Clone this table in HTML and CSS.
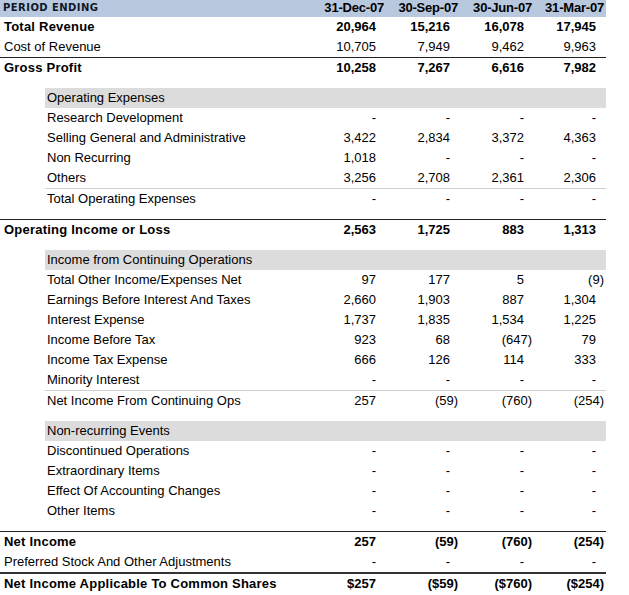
FILE: index.html
```html
<!DOCTYPE html>
<html>
<head>
<meta charset="utf-8">
<title>Income Statement</title>
<link rel="stylesheet" href="styles.css">
</head>
<body>
<div class="stmt">
  <div class="row head">
    <div class="lbl">PERIOD ENDING</div>
    <div class="c">31-Dec-07</div><div class="c">30-Sep-07</div><div class="c">30-Jun-07</div><div class="c">31-Mar-07</div>
  </div>
  <div class="row b">
    <div class="lbl">Total Revenue</div>
    <div class="c p">20,964</div><div class="c p">15,216</div><div class="c p">16,078</div><div class="c p">17,945</div>
  </div>
  <div class="row">
    <div class="lbl">Cost of Revenue</div>
    <div class="c p">10,705</div><div class="c p">7,949</div><div class="c p">9,462</div><div class="c p">9,963</div>
  </div>
  <div class="row b dark">
    <div class="lbl">Gross Profit</div>
    <div class="c p">10,258</div><div class="c p">7,267</div><div class="c p">6,616</div><div class="c p">7,982</div>
  </div>

  <div class="group">
    <div class="row sub band"><div class="lbl">Operating Expenses</div></div>
    <div class="row sub"><div class="lbl">Research Development</div><div class="c p">-</div><div class="c p">-</div><div class="c p">-</div><div class="c p">-</div></div>
    <div class="row sub"><div class="lbl">Selling General and Administrative</div><div class="c p">3,422</div><div class="c p">2,834</div><div class="c p">3,372</div><div class="c p">4,363</div></div>
    <div class="row sub"><div class="lbl">Non Recurring</div><div class="c p">1,018</div><div class="c p">-</div><div class="c p">-</div><div class="c p">-</div></div>
    <div class="row sub"><div class="lbl">Others</div><div class="c p">3,256</div><div class="c p">2,708</div><div class="c p">2,361</div><div class="c p">2,306</div></div>
    <div class="row sub light"><div class="lbl">Total Operating Expenses</div><div class="c p">-</div><div class="c p">-</div><div class="c p">-</div><div class="c p">-</div></div>
  </div>

  <div class="row b dark gap">
    <div class="lbl">Operating Income or Loss</div>
    <div class="c p">2,563</div><div class="c p">1,725</div><div class="c p">883</div><div class="c p">1,313</div>
  </div>

  <div class="group">
    <div class="row sub band"><div class="lbl">Income from Continuing Operations</div></div>
    <div class="row sub"><div class="lbl">Total Other Income/Expenses Net</div><div class="c p">97</div><div class="c p">177</div><div class="c p">5</div><div class="c">(9)</div></div>
    <div class="row sub"><div class="lbl">Earnings Before Interest And Taxes</div><div class="c p">2,660</div><div class="c p">1,903</div><div class="c p">887</div><div class="c p">1,304</div></div>
    <div class="row sub"><div class="lbl">Interest Expense</div><div class="c p">1,737</div><div class="c p">1,835</div><div class="c p">1,534</div><div class="c p">1,225</div></div>
    <div class="row sub"><div class="lbl">Income Before Tax</div><div class="c p">923</div><div class="c p">68</div><div class="c">(647)</div><div class="c p">79</div></div>
    <div class="row sub"><div class="lbl">Income Tax Expense</div><div class="c p">666</div><div class="c p">126</div><div class="c p">114</div><div class="c p">333</div></div>
    <div class="row sub"><div class="lbl">Minority Interest</div><div class="c p">-</div><div class="c p">-</div><div class="c p">-</div><div class="c p">-</div></div>
    <div class="row sub light"><div class="lbl">Net Income From Continuing Ops</div><div class="c p">257</div><div class="c">(59)</div><div class="c">(760)</div><div class="c">(254)</div></div>
  </div>

  <div class="group">
    <div class="row sub band"><div class="lbl">Non-recurring Events</div></div>
    <div class="row sub"><div class="lbl">Discontinued Operations</div><div class="c p">-</div><div class="c p">-</div><div class="c p">-</div><div class="c p">-</div></div>
    <div class="row sub"><div class="lbl">Extraordinary Items</div><div class="c p">-</div><div class="c p">-</div><div class="c p">-</div><div class="c p">-</div></div>
    <div class="row sub"><div class="lbl">Effect Of Accounting Changes</div><div class="c p">-</div><div class="c p">-</div><div class="c p">-</div><div class="c p">-</div></div>
    <div class="row sub"><div class="lbl">Other Items</div><div class="c p">-</div><div class="c p">-</div><div class="c p">-</div><div class="c p">-</div></div>
  </div>

  <div class="row b dark gap">
    <div class="lbl">Net Income</div>
    <div class="c p">257</div><div class="c">(59)</div><div class="c">(760)</div><div class="c">(254)</div>
  </div>
  <div class="row">
    <div class="lbl">Preferred Stock And Other Adjustments</div>
    <div class="c p">-</div><div class="c p">-</div><div class="c p">-</div><div class="c p">-</div>
  </div>
  <div class="row b thick">
    <div class="lbl">Net Income Applicable To Common Shares</div>
    <div class="c p">$257</div><div class="c">($59)</div><div class="c">($760)</div><div class="c">($254)</div>
  </div>
</div>
</body>
</html>
```

FILE: styles.css
```css
html, body {
  margin: 0;
  padding: 0;
  background: #ffffff;
}

.stmt {
  width: 606px;
  font-family: "Liberation Sans", Arial, sans-serif;
  font-size: 13px;
  color: #000;
}

.row {
  display: grid;
  grid-template-columns: 1fr 74px 74px 74px 72px;
  padding-right: 2px;
  height: 20px;
  line-height: 20px;
  white-space: nowrap;
}

.lbl {
  padding-left: 4px;
}

.c {
  text-align: right;
}

.c.p {
  padding-right: 8px;
}

.head {
  height: 17px;
  line-height: 16px;
  background: #b8c8de;
  font-weight: bold;
}

.head .c {
  letter-spacing: -0.2px;
}

.head .lbl {
  font-family: "DejaVu Sans", Verdana, sans-serif;
  font-size: 10px;
  letter-spacing: 0.45px;
  padding-left: 3px;
  color: #101828;
}

.b {
  font-weight: bold;
}

.b .lbl {
  letter-spacing: 0.22px;
}

.dark {
  border-top: 1px solid #222;
}

.thick {
  border-top: 2px solid #333;
}

.light {
  border-top: 1px solid #cfcfcf;
}

.gap {
  margin-top: 10px;
}

.group {
  margin-top: 10px;
}

.sub {
  margin-left: 45px;
}

.sub .lbl {
  padding-left: 2px;
}

.band {
  background: #dcdcdc;
}
```
